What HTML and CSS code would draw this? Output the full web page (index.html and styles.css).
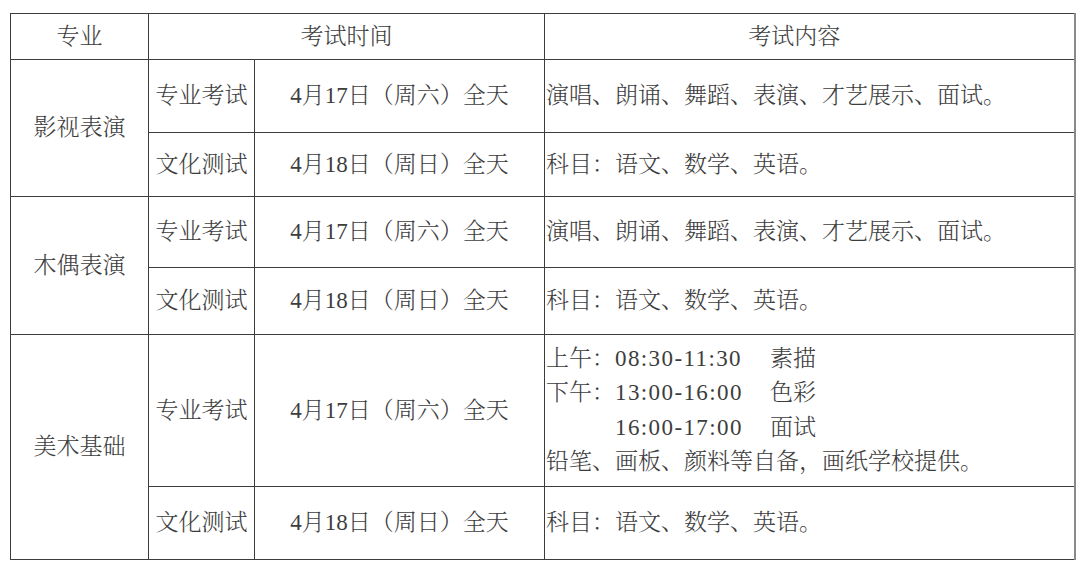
FILE: index.html
```html
<!DOCTYPE html>
<html lang="zh-CN">
<head>
<meta charset="utf-8">
<title>考试安排</title>
<link rel="stylesheet" href="styles.css">
</head>
<body>
<table class="schedule">
  <colgroup>
    <col class="c-major">
    <col class="c-type">
    <col class="c-time">
    <col class="c-content">
  </colgroup>
  <tr class="r-head">
    <th>专业</th>
    <th colspan="2">考试时间</th>
    <th class="h-content">考试内容</th>
  </tr>
  <tr class="r1">
    <td rowspan="2">影视表演</td>
    <td>专业考试</td>
    <td>4月17日（周六）全天</td>
    <td class="content">演唱、朗诵、舞蹈、表演、才艺展示、面试。</td>
  </tr>
  <tr class="r2">
    <td>文化测试</td>
    <td>4月18日（周日）全天</td>
    <td class="content">科目：语文、数学、英语。</td>
  </tr>
  <tr class="r3">
    <td rowspan="2">木偶表演</td>
    <td>专业考试</td>
    <td>4月17日（周六）全天</td>
    <td class="content">演唱、朗诵、舞蹈、表演、才艺展示、面试。</td>
  </tr>
  <tr class="r4">
    <td>文化测试</td>
    <td>4月18日（周日）全天</td>
    <td class="content">科目：语文、数学、英语。</td>
  </tr>
  <tr class="r5">
    <td rowspan="2">美术基础</td>
    <td>专业考试</td>
    <td>4月17日（周六）全天</td>
    <td class="content multi">
      <div class="line"><span class="lbl">上午：</span><span class="tm">08:30-11:30</span><span>素描</span></div>
      <div class="line"><span class="lbl">下午：</span><span class="tm">13:00-16:00</span><span>色彩</span></div>
      <div class="line"><span class="lbl"></span><span class="tm">16:00-17:00</span><span>面试</span></div>
      <div class="line">铅笔、画板、颜料等自备，画纸学校提供。</div>
    </td>
  </tr>
  <tr class="r6">
    <td>文化测试</td>
    <td>4月18日（周日）全天</td>
    <td class="content">科目：语文、数学、英语。</td>
  </tr>
</table>
</body>
</html>
```

FILE: styles.css
```css
html, body {
  margin: 0;
  padding: 0;
  background: #ffffff;
}

body {
  padding: 13px 0 0 10px;
  font-family: "Liberation Serif", "Noto Serif CJK SC", "Noto Sans CJK SC", serif;
  font-size: 23px;
  font-weight: 300;
  color: #3d3d3d;
}

.schedule {
  border-collapse: collapse;
  table-layout: fixed;
  width: 1064px;
}

.c-major { width: 138px; }
.c-type { width: 106px; }
.c-time { width: 290px; }
.c-content { width: 530px; }

.schedule th,
.schedule td {
  border: 1px solid #3c3c3c;
  padding: 0;
  font-weight: 300;
  text-align: center;
  vertical-align: middle;
  line-height: 30px;
  white-space: nowrap;
}

.schedule th.h-content {
  padding-right: 30px;
}

.schedule tr > :last-child {
  border-right: 2px solid #8a8a8a;
}

.r-head { height: 46px; }
.r1 { height: 73px; }
.r2 { height: 64px; }
.r3 { height: 71px; }
.r4 { height: 67px; }
.r5 { height: 152px; }
.r6 { height: 73px; }

.schedule td.content {
  text-align: left;
  padding-left: 1px;
}

.multi .line {
  line-height: 34.5px;
  display: flex;
}

.multi .lbl {
  display: inline-block;
  width: 69px;
}

.multi .tm {
  display: inline-block;
  width: 155px;
  letter-spacing: 1.4px;
}
```
